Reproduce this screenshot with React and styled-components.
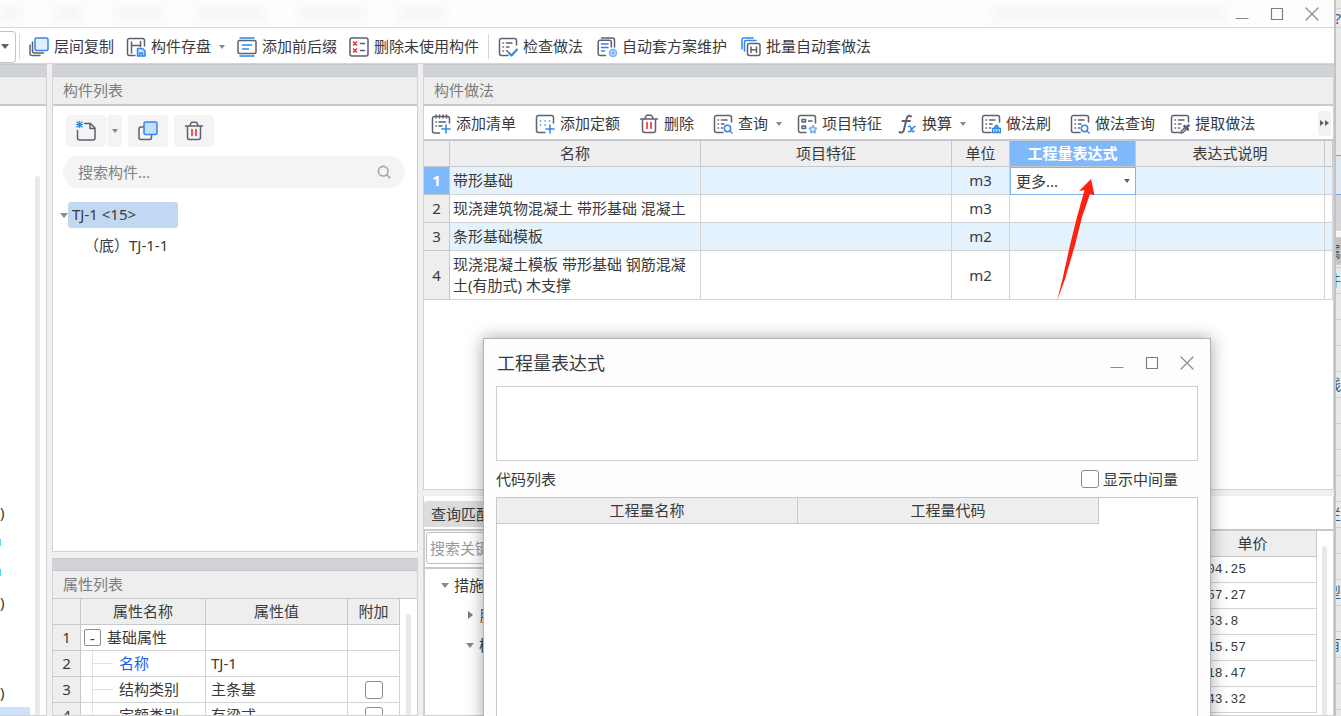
import React from 'react'
import styled, { createGlobalStyle, css } from 'styled-components'

const colors = {
  ink: '#3a3a3c',
  icon: '#5d6170',
  blue: '#2f86ee',
  red: '#e5242f',
  line: '#d4d4d4',
  dock: '#c6c9cd',
  head: '#eeeeee',
  active: '#80b9fb',
  row: '#e4f2fe',
}

const GlobalStyle = createGlobalStyle`
  * {
    box-sizing: border-box;
  }

  body {
    margin: 0;
    overflow: hidden;
    color: ${colors.ink};
    background: #f0f0f0;
  }

  body, button, input, select, textarea {
    font-family: 'Noto Sans', 'Noto Sans CJK SC', sans-serif;
    font-size: 15px;
    line-height: 21px;
  }

  button, select {
    color: inherit;
    padding: 0;
    border: 0;
    background: none;
  }
`

/* ---------- icons ---------- */

const Svg = styled.svg`
  flex: none;
  width: ${p => p.$size || 20}px;
  height: ${p => p.$size || 20}px;
  fill: none;
  stroke: ${colors.icon};
  stroke-width: 1.5;
  stroke-linecap: round;
  stroke-linejoin: round;

  .b {
    stroke: ${colors.blue};
  }
  .r {
    stroke: ${colors.red};
  }
`

const Icon = ({ children, size }) => (
  <Svg viewBox="0 0 20 20" $size={size} aria-hidden="true">
    {children}
  </Svg>
)

const Sheet = () => (
  <>
    <path d="M10 18.500H3.500a2 2 0 0 1-2-2v-13a2 2 0 0 1 2-2h13a2 2 0 0 1 2 2V8" />
    <path d="M5 6h.5M8.500 6H14M5 10h.5M8.500 10H11M5 14h.5M8.500 14H9.500" />
  </>
)

const icons = {
  copyFloor: (
    <Icon>
      <rect className="b" x="6" y="1" width="13" height="12.500" rx="1.500" fill="#e1effd" />
      <path d="M3.500 5v9a2 2 0 0 0 2 2h9M1 8v8.500a2 2 0 0 0 2 2h8" />
    </Icon>
  ),
  save: (
    <Icon>
      <path d="M9 18.500H3.500a2 2 0 0 1-2-2v-13a2 2 0 0 1 2-2h13a2 2 0 0 1 2 2V9M5.500 5v11M5.500 8.500H14M14.500 4.500v5" />
      <path className="b" d="M11.500 11.500h5l2.500 2.500v5h-7.500z" fill="#cfe4fc" />
      <path className="b" d="M13.500 18.500V16h3v2.500" />
    </Icon>
  ),
  affix: (
    <Icon>
      <path className="b" d="M3 1h14M3 19h14M5.500 8h9M5.500 12h6" />
      <rect x="1" y="3.500" width="18" height="13" rx="1.500" />
    </Icon>
  ),
  unused: (
    <Icon>
      <rect x="1" y="1" width="18" height="18" rx="2" />
      <path className="r" d="M4.500 5l3 3m0-3l-3 3M4.500 12l3 3m0-3l-3 3" />
      <path d="M11.500 6.500h4M11.500 13.500h4" />
    </Icon>
  ),
  check: (
    <Icon>
      <Sheet />
      <path className="b" d="M10.500 15.500l3 3 5.500-6" strokeWidth="2" />
    </Icon>
  ),
  scheme: (
    <Icon>
      <path d="M8.500 18.500H3a1.800 1.800 0 0 1-1.800-1.800V5A1.800 1.800 0 0 1 3 3.200h9.500A1.800 1.800 0 0 1 14.300 5v5" />
      <path d="M4.500 1h11a2 2 0 0 1 2 2v7" />
      <path className="b" d="M4.500 7h6.500M4.500 10.500h6.500M4.500 14h3" />
      <circle cx="16" cy="16" r="3.500" fill="#cfe4fc" stroke="#76b0f6" />
      <circle cx="16" cy="16" r="1" stroke="#76b0f6" />
    </Icon>
  ),
  batch: (
    <Icon>
      <path className="b" d="M1 12V2.500A1.500 1.500 0 0 1 2.500 1H12M3.500 14V5A1.500 1.500 0 0 1 5 3.500h10" />
      <rect x="6.500" y="6.500" width="12.500" height="12" rx="2" />
      <path d="M10 10v5.500M15.500 10v5.500M10 12.800h5.500" />
    </Icon>
  ),
  addList: (
    <Icon>
      <path d="M8.500 19H3.500a2 2 0 0 1-2-2V4.500a2 2 0 0 1 2-2h13a2 2 0 0 1 2 2V9" />
      <path d="M5 1v3M8.500 1v3M12 1v3M15.500 1v3M5 8h.500M8 8h6.500M5 12h.500M8 12h3" />
      <path className="b" d="M15 11v8M11 15h8" />
    </Icon>
  ),
  addQuota: (
    <Icon>
      <path d="M10 18.500H3.500a2 2 0 0 1-2-2v-13a2 2 0 0 1 2-2h13a2 2 0 0 1 2 2V9" />
      <path className="b" d="M5.500 7h.2M10 7h.2M14.500 7h.2M5.500 11h.2M10 11h.2" />
      <path className="b" d="M15 11v8M11 15h8" />
    </Icon>
  ),
  trash: (
    <Icon>
      <path d="M1.500 5h17M6 4.500l1-2.500a1.500 1.500 0 0 1 1.200-.8h3.600A1.500 1.500 0 0 1 13 2l1 2.500M3.500 5.500v11a2 2 0 0 0 2 2h9a2 2 0 0 0 2-2v-11" />
      <path className="r" d="M8 8.500v6M12 8.500v6" />
    </Icon>
  ),
  query: (
    <Icon>
      <Sheet />
      <circle className="b" cx="14.500" cy="14.500" r="3.200" />
      <path className="b" d="M17 17l2 2" />
    </Icon>
  ),
  feature: (
    <Icon>
      <path d="M9 18.500H3.500a2 2 0 0 1-2-2v-13a2 2 0 0 1 2-2h13a2 2 0 0 1 2 2V9" />
      <path d="M5 5.500h3.500V8H5zM5 12h3.500v2.500H5zM11.500 7h3.500" />
      <path d="M16 11.500l1.300 2.300 2.400.5-1.700 1.900.3 2.600-2.300-1.100-2.300 1.100.3-2.600-1.700-1.900 2.400-.5z" stroke="#76b0f6" fill="#e1effd" />
    </Icon>
  ),
  fx: (
    <Icon>
      <path d="M14 2.500c-2.500-1.800-4 .2-4.600 3L7 15.500c-.6 2.800-2.500 4-4.500 2.500M5.500 7H13" strokeWidth="2" />
      <path className="b" d="M11.500 12.500c2-.8 2.200.5 3 3.500.5 1.800 1.300 2 2.500 1.200M18 12.500c-2 0-3 3-4 4.300-.6.800-1.500 1-2.500.7" />
    </Icon>
  ),
  brush: (
    <Icon>
      <Sheet />
      <path className="b" d="M11.500 18.500v-4h8v4zM13.500 14.500v-1.500h1.200v-1.500h1.600v1.500h1.200v1.500M14.200 16.500v2M16.800 16.500v2" fill="#cfe4fc" strokeWidth="1.300" />
    </Icon>
  ),
  extract: (
    <Icon>
      <Sheet />
      <path d="M11 19l.5-2 4-4 1.500 1.500-4 4z" />
      <path d="M14.500 12l3.500 3.500M16.500 13.500l2-2" strokeWidth="2.500" />
    </Icon>
  ),
  create: (
    <Icon>
      <path d="M8.500 2.500h6L19 7v10a2 2 0 0 1-2 2H3.500a2 2 0 0 1-2-2V9.500M14 3v4.500h4.500" />
      <path className="b" d="M1 1l5 5M6 1L1 6M3.500.5v6M.5 3.500h6" strokeWidth="1.200" />
    </Icon>
  ),
  copy: (
    <Icon>
      <rect x="1" y="6" width="12.500" height="12.500" rx="2" />
      <rect className="b" x="6" y="1" width="13" height="12.500" rx="1.500" fill="#c6ddf8" />
    </Icon>
  ),
  search: (
    <Icon size={16}>
      <circle cx="9" cy="9" r="6" stroke="#a6a6a6" strokeWidth="2" />
      <path d="M13.500 13.500l3.500 3.500" stroke="#a6a6a6" strokeWidth="2" />
    </Icon>
  ),
}

const Caret = styled.span`
  flex: none;
  width: 0;
  height: 0;
  border: ${p => (p.$small ? 3 : 4)}px solid transparent;
  border-top: ${p => (p.$small ? 4 : 5)}px solid ${p => p.$color || '#8a8a8a'};
  border-bottom: 0;
  ${p =>
    p.$right &&
    css`
      border: 4px solid transparent;
      border-left: 5px solid #7d7d7d;
      border-right: 0;
      margin: 0 2px;
    `}
`

/* ---------- window frame ---------- */

const Desktop = styled.div`
  display: flex;
  height: 100vh;
  overflow: hidden;
`

const Window = styled.main`
  position: relative;
  flex: 1;
  min-width: 0;
  display: flex;
  flex-direction: column;
  background: #f0f0f0;
  border-right: 2px solid #c2c3c5;
`

const TitleBar = styled.header`
  display: flex;
  justify-content: space-between;
  align-items: center;
  height: 28px;
  padding-right: 5px;
  background: #fdfdfd;
  border-bottom: 1px solid #d5d5d5;
`

const Ghosts = styled.div`
  flex: 1;
  display: flex;
  align-items: center;
  gap: 36px;
  filter: blur(5px);
`

const Ghost = styled.span`
  width: ${p => p.$width}px;
  height: 14px;
  background: #f5f5f5;
  margin-left: ${p => (p.$push ? 'auto' : 0)};
`

const WindowButtons = styled.div`
  display: flex;
`

const WindowButton = styled.button`
  display: flex;
  align-items: center;
  justify-content: center;
  width: 35px;
  height: 28px;
`

const Controls = () => (
  <WindowButtons>
    <WindowButton aria-label="最小化">
      <Svg viewBox="0 0 14 14" $size={14}>
        <path d="M1 11.500h12" stroke="#8a8a8a" strokeWidth="1.200" />
      </Svg>
    </WindowButton>
    <WindowButton aria-label="最大化">
      <Svg viewBox="0 0 14 14" $size={14}>
        <rect x="1.500" y="1.500" width="11" height="11" stroke="#7d7d7d" strokeWidth="1.200" />
      </Svg>
    </WindowButton>
    <WindowButton aria-label="关闭">
      <Svg viewBox="0 0 14 14" $size={14}>
        <path d="M1 1l12 12M13 1L1 13" stroke="#8a8a8a" strokeWidth="1.200" />
      </Svg>
    </WindowButton>
  </WindowButtons>
)

const MainBar = styled.nav`
  display: flex;
  align-items: center;
  gap: 9px;
  height: 36px;
  padding-top: 2px;
  background: #fff;
  border-bottom: 1px solid #d5d5d5;
`

const Group = styled.div`
  display: flex;
  align-items: center;
  gap: ${p => p.$gap}px;
`

const DropBox = styled.button`
  display: flex;
  align-items: center;
  width: 16px;
  height: 32px;
  padding-left: 1px;
  border: 1px solid #c4c4c4;
  border-left: 0;
  border-radius: 0 4px 4px 0;
  margin-right: -6px;
`

const Separator = styled.span`
  width: 1px;
  height: 25px;
  background: #d8d8d8;
`

const Tool = styled.button`
  display: flex;
  align-items: center;
  gap: 5px;
  white-space: nowrap;
  margin-right: ${p => (p.$wide ? 4 : 0)}px;

  ${Caret} {
    margin-left: 3px;
  }
`

/* ---------- docked panels ---------- */

const Workspace = styled.div`
  flex: 1;
  min-height: 0;
  display: grid;
  grid-template-columns: 47px 366px minmax(0, 1fr);
  column-gap: 5px;
`

const Column = styled.div`
  display: flex;
  flex-direction: column;
  gap: 6px;
  min-width: 0;
  min-height: 0;
`

const Panel = styled.section`
  display: flex;
  flex-direction: column;
  flex: ${p => (p.$height ? `0 0 ${p.$height}px` : 1)};
  min-height: 0;
  overflow: hidden;
  background: #fff;
  border: solid #d0d2d5;
  border-width: 0 1px 1px ${p => (p.$flush ? 0 : 1)}px;
`

const Strip = styled.div`
  flex: none;
  height: 13px;
  background: #d2d3d9;
  border: solid ${colors.dock};
  border-width: 1px 0;
`

const PanelTitle = styled.h2`
  flex: none;
  height: ${p => (p.$thin ? 28 : 29)}px;
  margin: 0;
  padding: 2px 10px;
  font-size: 15px;
  font-weight: normal;
  line-height: 23px;
  color: #7c7c7c;
  background: ${colors.head};
  border-bottom: ${p => (p.$thin ? 1 : 2)}px solid ${colors.dock};
`

const Body = styled.div`
  flex: 1;
  display: flex;
  min-height: 0;
`

const Scroll = styled.span`
  flex: none;
  width: 5px;
  margin: ${p => p.$top}px 6px 0 ${p => p.$left || 5}px;
  border-radius: 3px 3px 0 0;
  background: #e9e9e9;
`

const Cut = styled.div`
  flex: 1;
  padding-top: 391px;
  overflow: hidden;
`

const CutRow = styled.div`
  display: flex;
  align-items: center;
  height: 30px;
  width: 31px;
  background: ${p => (p.$selected ? '#cfe2fa' : 'none')};
`

const CutMark = styled.span`
  width: 1px;
  height: 7px;
  background: #4fdcee;
`

/* ---------- component list ---------- */

const ListTools = styled.div`
  display: flex;
  gap: 6px;
  padding: 9px 13px;
`

const Split = styled.div`
  display: flex;
  gap: 1px;
`

const Square = styled.button`
  display: flex;
  align-items: center;
  justify-content: center;
  width: ${p => (p.$narrow ? 15 : 40)}px;
  height: 32px;
  border-radius: 4px;
  background: #f4f4f4;
`

const SearchPill = styled.label`
  display: flex;
  align-items: center;
  height: 32px;
  margin: 0 12px 0 10px;
  padding: 0 13px 0 15px;
  border-radius: 16px;
  background: #f4f4f4;
`

const SearchInput = styled.input`
  flex: 1;
  min-width: 0;
  border: 0;
  padding: 0;
  outline: 0;
  background: none;

  &::placeholder {
    color: #828282;
    opacity: 1;
  }
`

const Tree = styled.ul`
  margin: 0;
  padding: ${p => p.$pad};
  list-style: none;
`

const TreeRow = styled.li`
  display: flex;
  align-items: center;
  height: 30px;
  padding-left: ${p => p.$indent || 0}px;
  gap: ${p => p.$gap || 0}px;
  white-space: nowrap;
`

const Chosen = styled.span`
  width: 110px;
  padding: 2px 4px 3px;
  border-radius: 3px;
  background: #c0d8f1;
`

/* ---------- grids ---------- */

const Grid = styled.table`
  flex: 1;
  width: 100%;
  table-layout: fixed;
  border-collapse: separate;
  border-spacing: 0;
  align-self: flex-start;
`

const Th = styled.th`
  height: ${p => p.$height || 26}px;
  padding: 0;
  font-weight: ${p => (p.$active ? 'bold' : 'normal')};
  color: ${p => (p.$active ? '#fff' : 'inherit')};
  background: ${p => (p.$active ? colors.active : colors.head)};
  border: solid #c8c8c8;
  border-width: 0 1px 1px 0;
`

const Td = styled.td`
  height: ${p => p.$height || 28}px;
  padding: ${p => p.$pad || '0 3px'};
  text-align: ${p => (p.$center ? 'center' : 'left')};
  color: ${p => (p.$link ? '#1a5cf5' : 'inherit')};
  background: ${p => (p.$tint ? colors.row : '#fff')};
  border: solid ${colors.line};
  border-width: 0 1px 1px 0;
`

const PickCell = styled(Td)`
  padding: 0;
  border: 1px solid #7fb5f3;
`

const Pick = styled.div`
  display: flex;
  align-items: center;
  padding-right: 5px;
`

const PickSelect = styled.select`
  flex: 1;
  min-width: 0;
  height: 24px;
  padding-left: 5px;
  appearance: none;
  outline: 0;
`

const MethodBar = styled.div`
  display: flex;
  flex: none;
  align-items: center;
  justify-content: space-between;
  height: 35px;
  padding: 2px 2px 0 7px;
  border-bottom: 2px solid ${colors.dock};
`

const MoreButton = styled.button`
  width: 13px;
  height: 25px;
  border-radius: 4px;
  background: #f2f2f2;
`

/* ---------- attributes ---------- */

const NameCell = styled.div`
  display: flex;
  align-items: center;
  gap: 6px;
  height: 25px;
`

const Fold = styled.button`
  width: 17px;
  height: 17px;
  line-height: 14px;
  border: 1px solid #8c8c8c;
  border-radius: 2px;
`

const Branch = styled.span`
  width: 21px;
  height: 25px;
  margin: 0 0 0 8px;
  border-left: 1px solid #e2e2e2;
  background: linear-gradient(#e2e2e2, #e2e2e2) center / 100% 1px no-repeat;
`

const Check = styled.input`
  appearance: none;
  display: block;
  width: 18px;
  height: 18px;
  margin: ${p => (p.$cell ? '0 auto' : 0)};
  border: 1px solid #8c8c8c;
  border-radius: 3px;
  background: #fff;
`

/* ---------- query area ---------- */

const TabBar = styled.div`
  display: flex;
  flex: none;
  align-items: flex-end;
  height: 35px;
  padding-bottom: 2px;
  border-bottom: 2px solid ${colors.dock};
`

const Tab = styled.button`
  height: 26px;
  padding: 0 7px;
  border-radius: 3px 3px 0 0;
  background: #dcdcdc;
`

const QueryTree = styled.div`
  flex: 1;
  min-width: 0;
  border-left: 1px solid ${colors.dock};
`

const KeywordBox = styled.div`
  padding: 1px 1px 3px;
  border-bottom: 2px solid ${colors.dock};
`

const Keyword = styled.input`
  display: block;
  width: 100%;
  height: 32px;
  padding: 0 3px;
  border: 1px solid #bdbdbd;
  border-radius: 3px;

  &::placeholder {
    color: #9a9a9a;
    opacity: 1;
  }
`

const Prices = styled.div`
  display: flex;
  flex: 0 0 144px;
`

const PriceTd = styled(Td)`
  padding: 0 0 0 18px;
  font-family: 'Liberation Mono', monospace;
  font-size: 13px;
`

/* ---------- dialog ---------- */

const Dialog = styled.section`
  position: absolute;
  top: 338px;
  left: 483px;
  right: 123px;
  bottom: -20px;
  display: flex;
  flex-direction: column;
  padding: 0 12px;
  background: #fdfdfd;
  border: 1px solid #b2b2b2;
  box-shadow: 0 0 16px rgba(0, 0, 0, 0.35);
`

const DialogHead = styled.div`
  display: flex;
  align-items: center;
  justify-content: space-between;
  height: 47px;
  margin-right: -6px;
  padding-left: 1px;
`

const DialogTitle = styled.h1`
  margin: 0;
  font-size: 18px;
  font-weight: normal;
  line-height: 24px;
`

const Expression = styled.textarea`
  display: block;
  flex: none;
  width: 100%;
  height: 75px;
  resize: none;
  outline: 0;
  border: 1px solid #cfcfcf;
`

const CodeHead = styled.div`
  display: flex;
  align-items: center;
  justify-content: space-between;
  height: 36px;
  padding-right: 20px;
`

const CheckLabel = styled.label`
  display: flex;
  align-items: center;
  gap: 4px;
`

const CodeBox = styled.div`
  flex: 1;
  padding-right: 98px;
  background: #fff;
  border: 1px solid #c8c8c8;
`

/* ---------- things over or beside the window ---------- */

const Pointer = styled.svg`
  position: absolute;
  top: 178px;
  left: 1056px;
  width: 40px;
  height: 124px;
  pointer-events: none;
`

const Behind = styled.aside`
  flex: 0 0 5px;
  overflow: hidden;
  background: #e9e9e9;
`

const Slice = styled.div`
  display: flex;
  align-items: center;
  justify-content: flex-end;
  height: ${p => p.$height || 26}px;
  overflow: hidden;
  color: ${p => p.$ink || '#37618c'};
  background: ${p => p.$fill || 'none'};
  border-bottom: 1px solid ${p => p.$edge || '#cfcfcf'};
`

const mainTools = [
  ['copyFloor', '层间复制'],
  ['save', '构件存盘', true],
  ['affix', '添加前后缀'],
  ['unused', '删除未使用构件'],
]

const schemeTools = [
  ['check', '检查做法'],
  ['scheme', '自动套方案维护'],
  ['batch', '批量自动套做法'],
]

const methodTools = [
  { icon: 'addList', text: '添加清单', wide: true },
  { icon: 'addQuota', text: '添加定额', wide: true },
  { icon: 'trash', text: '删除', wide: true },
  { icon: 'query', text: '查询', menu: true },
  { icon: 'feature', text: '项目特征' },
  { icon: 'fx', text: '换算', menu: true },
  { icon: 'brush', text: '做法刷', wide: true },
  { icon: 'query', text: '做法查询' },
  { icon: 'extract', text: '提取做法' },
]

const methods = [
  ['带形基础', 'm3'],
  ['现浇建筑物混凝土 带形基础 混凝土', 'm3'],
  ['条形基础模板', 'm2'],
  ['现浇混凝土模板 带形基础 钢筋混凝土(有肋式) 木支撑', 'm2'],
]

const attributes = [
  ['名称', 'TJ-1'],
  ['结构类别', '主条基'],
  ['定额类别', '有梁式'],
]

const prices = ['04.25', '57.27', '53.8', '15.57', '18.47', '43.32']

const slices = ['', '', '', '线', '', '', '', '', '栏', '', '', '型', '', '有', '', '', '']

const ToolList = ({ tools }) =>
  tools.map(([icon, text, menu]) => (
    <Tool key={text}>
      {icons[icon]}
      {text}
      {menu && <Caret $small />}
    </Tool>
  ))

const ComponentList = () => (
  <Panel>
    <Strip />
    <PanelTitle>构件列表</PanelTitle>
    <ListTools>
      <Split>
        <Square aria-label="新建">{icons.create}</Square>
        <Square $narrow aria-label="新建选项">
          <Caret $small />
        </Square>
      </Split>
      <Square aria-label="复制">{icons.copy}</Square>
      <Square aria-label="删除">{icons.trash}</Square>
    </ListTools>
    <SearchPill>
      <SearchInput placeholder="搜索构件..." aria-label="搜索构件" />
      {icons.search}
    </SearchPill>
    <Tree $pad="12px 7px">
      <TreeRow>
        <Caret />
        <Chosen>TJ-1 &lt;15&gt;</Chosen>
      </TreeRow>
      <TreeRow $indent={24}>（底）TJ-1-1</TreeRow>
    </Tree>
  </Panel>
)

const AttributeList = () => (
  <Panel $height={158}>
    <Strip />
    <PanelTitle $thin>属性列表</PanelTitle>
    <Body>
      <Grid>
        <colgroup>
          <col width="28" />
          <col />
          <col width="142" />
          <col width="52" />
        </colgroup>
        <thead>
          <tr>
            <Th />
            <Th>属性名称</Th>
            <Th>属性值</Th>
            <Th>附加</Th>
          </tr>
        </thead>
        <tbody>
          <tr>
            <Th as="td" align="center">1</Th>
            <Td $height={26}>
              <NameCell>
                <Fold aria-label="折叠">-</Fold>
                基础属性
              </NameCell>
            </Td>
            <Td $height={26} />
            <Td $height={26} />
          </tr>
          {attributes.map(([name, value], i) => (
            <tr key={name}>
              <Th as="td" align="center">{i + 2}</Th>
              <Td $height={26} $link={i === 0}>
                <NameCell>
                  <Branch />
                  {name}
                </NameCell>
              </Td>
              <Td $height={26} $pad="0 5px">
                {value}
              </Td>
              <Td $height={26}>{i > 0 && <Check $cell type="checkbox" aria-label={name} />}</Td>
            </tr>
          ))}
        </tbody>
      </Grid>
      <Scroll $top={15} $left={6} />
    </Body>
  </Panel>
)

const Methods = () => (
  <Panel>
    <Strip />
    <PanelTitle>构件做法</PanelTitle>
    <MethodBar>
      <Group $gap={15}>
        {methodTools.map(t => (
          <Tool key={t.text} $wide={t.wide}>
            {icons[t.icon]}
            {t.text}
            {t.menu && <Caret $small />}
          </Tool>
        ))}
      </Group>
      <MoreButton aria-label="更多工具">
        <Svg viewBox="0 0 13 13" $size={13}>
          <path d="M2 4l4 3-4 3zM7 4l4 3-4 3z" fill={colors.icon} stroke="none" />
        </Svg>
      </MoreButton>
    </MethodBar>
    <Body>
      <Grid>
        <colgroup>
          <col width="26" />
          <col />
          <col />
          <col width="58" />
          <col width="126" />
          <col width="189" />
          <col width="8" />
        </colgroup>
        <thead>
          <tr>
            <Th />
            <Th>名称</Th>
            <Th>项目特征</Th>
            <Th>单位</Th>
            <Th $active>工程量表达式</Th>
            <Th>表达式说明</Th>
            <Th />
          </tr>
        </thead>
        <tbody>
          {methods.map(([name, unit], i) => {
            const tint = i % 2 === 0
            return (
              <tr key={name}>
                <Th as="td" align="center" $active={i === 0}>
                  {i + 1}
                </Th>
                <Td $tint={tint} $pad={i === 3 ? '3px' : undefined}>
                  {name}
                </Td>
                <Td $tint={tint} />
                <Td $tint={tint} $center>
                  {unit}
                </Td>
                {i === 0 ? (
                  <PickCell>
                    <Pick>
                      <PickSelect aria-label="工程量表达式">
                        <option>更多...</option>
                      </PickSelect>
                      <Caret $small $color="#5d6170" />
                    </Pick>
                  </PickCell>
                ) : (
                  <Td $tint={tint} />
                )}
                <Td $tint={tint} />
                <Td $tint={tint} />
              </tr>
            )
          })}
        </tbody>
      </Grid>
    </Body>
  </Panel>
)

const Query = () => (
  <Panel $height={220}>
    <TabBar>
      <Tab>查询匹配</Tab>
    </TabBar>
    <Body>
      <QueryTree>
        <KeywordBox>
          <Keyword placeholder="搜索关键字" aria-label="搜索关键字" />
        </KeywordBox>
        <Tree $pad="1px 0">
          <TreeRow $indent={16} $gap={5}>
            <Caret />
            措施
          </TreeRow>
          <TreeRow $indent={41} $gap={5}>
            <Caret $right />
            脚
          </TreeRow>
          <TreeRow $indent={41} $gap={5}>
            <Caret />
            模
          </TreeRow>
        </Tree>
      </QueryTree>
      <Prices>
        <Grid>
          <thead>
            <tr>
              <Th>单价</Th>
            </tr>
          </thead>
          <tbody>
            {prices.map(price => (
              <tr key={price}>
                <PriceTd $height={26}>{price}</PriceTd>
              </tr>
            ))}
          </tbody>
        </Grid>
        <Scroll $top={15} />
      </Prices>
    </Body>
  </Panel>
)

const ExpressionDialog = () => (
  <Dialog role="dialog" aria-labelledby="expression-title">
    <DialogHead>
      <DialogTitle id="expression-title">工程量表达式</DialogTitle>
      <Controls />
    </DialogHead>
    <Expression aria-labelledby="expression-title" />
    <CodeHead>
      <span>代码列表</span>
      <CheckLabel>
        <Check type="checkbox" />
        显示中间量
      </CheckLabel>
    </CodeHead>
    <CodeBox>
      <Grid>
        <thead>
          <tr>
            <Th>工程量名称</Th>
            <Th>工程量代码</Th>
          </tr>
        </thead>
      </Grid>
    </CodeBox>
  </Dialog>
)

export default function App() {
  return (
    <Desktop>
      <GlobalStyle />
      <Window>
        <TitleBar>
          <Ghosts>
            {[20, 25, 45, 65, 65, 45].map((width, i) => (
              <Ghost key={i} $width={width} />
            ))}
            <Ghost $push $width={230} />
          </Ghosts>
          <Controls />
        </TitleBar>
        <MainBar>
          <DropBox aria-label="选择">
            <Caret $color="#5d6170" />
          </DropBox>
          <Separator />
          <Group $gap={12}>
            <ToolList tools={mainTools} />
          </Group>
          <Separator />
          <Group $gap={14}>
            <ToolList tools={schemeTools} />
          </Group>
        </MainBar>
        <Workspace>
          <Column>
            <Panel $flush>
              <Strip />
              <PanelTitle />
              <Body>
                <Cut>
                  <CutRow>)</CutRow>
                  <CutRow>
                    <CutMark />
                  </CutRow>
                  <CutRow>
                    <CutMark />
                  </CutRow>
                  <CutRow>)</CutRow>
                  <CutRow />
                  <CutRow />
                  <CutRow>)</CutRow>
                  <CutRow $selected />
                </Cut>
                <Scroll $top={70} />
              </Body>
            </Panel>
          </Column>
          <Column>
            <ComponentList />
            <AttributeList />
          </Column>
          <Column>
            <Methods />
            <Query />
          </Column>
        </Workspace>
        <Pointer viewBox="0 0 40 124">
          <path d="M35 1L23 13l5.500-1L21 39l-7 28-7.500 34L1 123l8-22 10-34 7-28 8-23 4.500 1z" fill="#ff2012" />
        </Pointer>
        <ExpressionDialog />
      </Window>
      <Behind>
        <Slice $height={9} />
        <Slice $height={19}>?</Slice>
        <Slice $height={128} $edge="#6ea8ea" />
        <Slice $height={39} $fill="#dde7f1" $edge="#6ea8ea" />
        <Slice $height={37} $fill="#d5d5da" $edge="#fff" />
        <Slice $height={6} $fill="#f4f4f4" />
        <Slice $height={27} $fill="#c4c4c4" $ink="#555">
          属
        </Slice>
        <Slice $height={3} />
        <Slice>件</Slice>
        {slices.map((text, i) => (
          <Slice key={i}>{text}</Slice>
        ))}
      </Behind>
    </Desktop>
  )
}
